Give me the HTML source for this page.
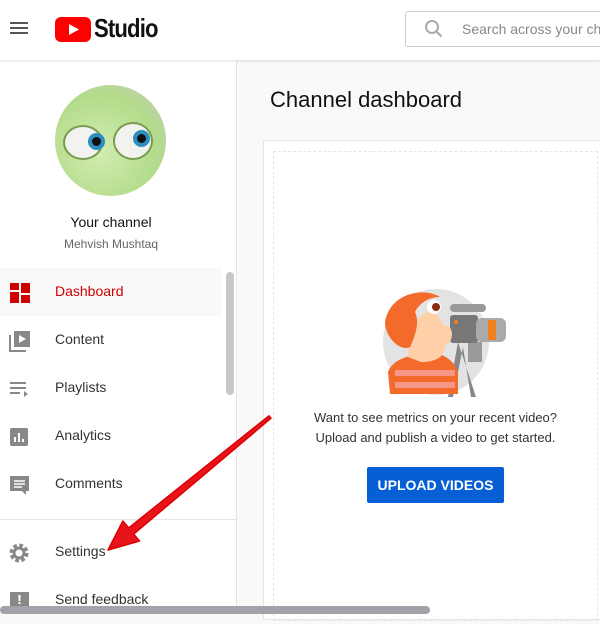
<!DOCTYPE html>
<html><head><meta charset="utf-8"><style>
*{margin:0;padding:0;box-sizing:border-box}
body{width:600px;height:612px;overflow:hidden;background:#f9f9f9;font-family:"Liberation Sans",sans-serif;position:relative}
.hdr{position:absolute;left:0;top:0;width:600px;height:60px;background:#fff;box-shadow:0 1px 3px rgba(0,0,0,.12);z-index:2}
.side{position:absolute;left:0;top:60px;width:237px;height:552px;background:#fff;border-right:1px solid #e5e5e5}
.item{position:absolute;left:0;width:222px;height:48px}
.item span{position:absolute;left:55px;top:15px;font-size:14px;color:#333}
.item svg{position:absolute;left:9px;top:14px}
</style></head><body>
<div class="hdr">
<div style="position:absolute;left:10px;top:22px;width:18px;height:2px;background:#555;box-shadow:0 5px 0 #555,0 10px 0 #555"></div>
<svg style="position:absolute;left:55px;top:17px" width="36" height="25"><rect width="36" height="25" rx="6" fill="#f00"/><path d="M14 7l10 5.5-10 5.5z" fill="#fff"/></svg>
<div style="position:absolute;left:94px;top:13px;font-size:26px;font-weight:bold;color:#111;letter-spacing:-1px;transform:scaleX(.85);transform-origin:left">Studio</div>
<div style="position:absolute;left:405px;top:11px;width:220px;height:36px;border:1px solid #ccc;border-radius:3px"></div>
<svg style="position:absolute;left:424px;top:19px" width="20" height="20"><circle cx="8" cy="8" r="6" fill="none" stroke="#aaa" stroke-width="2"/><path d="M12.5 12.5l5 5" stroke="#aaa" stroke-width="2"/></svg>
<div style="position:absolute;left:462px;top:21px;font-size:14px;color:#888;white-space:nowrap">Search across your cha</div>
</div>
<div class="side">
<div style="position:absolute;left:55px;top:25px;width:111px;height:111px;border-radius:50%;background:radial-gradient(circle at 40% 60%,#d2ecb0,#b2dc8a 60%,#c8c8c0)"></div>
<div style="position:absolute;left:63px;top:65px;width:40px;height:35px;border-radius:50%;background:#f2f2ee;border:2px solid #7a9a50"></div>
<div style="position:absolute;left:113px;top:62px;width:40px;height:38px;border-radius:50%;background:#f2f2ee;border:2px solid #7a9a50"></div>
<div style="position:absolute;left:88px;top:73px;width:17px;height:17px;border-radius:50%;background:#111;border:4px solid #2a8fc0"></div>
<div style="position:absolute;left:133px;top:70px;width:17px;height:17px;border-radius:50%;background:#111;border:4px solid #2a8fc0"></div>
<div style="position:absolute;left:0;top:154px;width:222px;text-align:center;font-size:14px;color:#111">Your channel</div>
<div style="position:absolute;left:0;top:177px;width:222px;text-align:center;font-size:12px;color:#666">Mehvish Mushtaq</div>
<div class="item" style="top:208px;background:#f9f9f9"><svg width="22" height="22"><rect x="1" y="1" width="9" height="7" fill="#c00"/><rect x="12" y="1" width="9" height="10" fill="#c00"/><rect x="1" y="10" width="9" height="11" fill="#c00"/><rect x="12" y="13" width="9" height="8" fill="#c00"/></svg><span style="color:#c00">Dashboard</span></div>
<div class="item" style="top:256px"><svg width="22" height="22"><path d="M1 5v16h16" fill="none" stroke="#888" stroke-width="2"/><rect x="5" y="1" width="16" height="16" fill="#888"/><path d="M10 5l7 4-7 4z" fill="#fff"/></svg><span>Content</span></div>
<div class="item" style="top:304px"><svg width="22" height="22"><path d="M1 5h16M1 10h16M1 15h10" stroke="#888" stroke-width="2"/><path d="M15 13l4 3-4 3z" fill="#888"/></svg><span>Playlists</span></div>
<div class="item" style="top:352px"><svg width="22" height="22"><rect x="1" y="2" width="18" height="18" rx="2" fill="#888"/><path d="M6 16v-5M10 16v-9M14 16v-3" stroke="#fff" stroke-width="2"/></svg><span>Analytics</span></div>
<div class="item" style="top:400px"><svg width="22" height="22"><path d="M1 2h19v15h-3v4l-4-4H1z" fill="#888"/><path d="M5 7h11M5 10h11M5 13h8" stroke="#fff" stroke-width="1.5"/></svg><span>Comments</span></div>
<div style="position:absolute;left:0;top:459px;width:237px;height:1px;background:#e5e5e5"></div>
<div class="item" style="top:468px"><svg width="22" height="22"><circle cx="10" cy="11" r="7" fill="none" stroke="#888" stroke-width="5" stroke-dasharray="3.3 2.2"/><circle cx="10" cy="11" r="5" fill="none" stroke="#888" stroke-width="3"/></svg><span>Settings</span></div>
<div class="item" style="top:516px"><svg width="22" height="22"><path d="M1 2h19v15H5l-4 4z" fill="#888"/><rect x="9.5" y="5" width="2" height="6" fill="#fff"/><rect x="9.5" y="12" width="2" height="2" fill="#fff"/></svg><span>Send feedback</span></div>
<div style="position:absolute;left:226px;top:212px;width:8px;height:123px;border-radius:4px;background:#c8c8c8"></div>
</div>
<div style="position:absolute;left:270px;top:87px;font-size:22px;color:#111">Channel dashboard</div>
<div style="position:absolute;left:263px;top:140px;width:340px;height:480px;background:#fff;border:1px solid #e5e5e5"></div>
<div style="position:absolute;left:273px;top:151px;width:325px;height:470px;border:1px dashed #e5e5e5"></div>
<svg style="position:absolute;left:370px;top:282px" width="140" height="120">
<circle cx="66" cy="60" r="53" fill="#e3e3e3"/>
<path d="M98 60h14v20h-14z" fill="#999"/>
<path d="M88 60l-10 55h5l10-50 8 50h5z" fill="#888"/>
<path d="M18 90c5-15 30-20 50-18 10 2 18 10 20 20v20H20z" fill="#f46a2a"/>
<path d="M25 88h60v6H25zM25 100h60v6H25z" fill="#f7a3a3" opacity=".8"/>
<path d="M38 75c0-20 5-40 20-45 15 0 18 20 18 30 0 15-10 20-25 20z" fill="#ffd0a8"/>
<path d="M15 40c5-30 40-35 55-25-10 0-20 5-25 15 5 10 0 25-5 35-10 5-25-10-25-25z" fill="#f46a2a"/>
<circle cx="64" cy="25" r="7" fill="#fff"/><circle cx="66" cy="25" r="4" fill="#8b2a10"/>
<rect x="80" y="33" width="28" height="28" rx="3" fill="#777"/>
<rect x="80" y="22" width="36" height="8" rx="4" fill="#999"/>
<rect x="106" y="36" width="30" height="24" rx="6" fill="#aaa"/>
<rect x="118" y="38" width="8" height="20" fill="#f08020"/>
<circle cx="86" cy="40" r="2" fill="#f08020"/>
<path d="M70 45c10-5 15 5 10 15-5 5-10 3-10 0z" fill="#ffd0a8"/>
</svg>
<div style="position:absolute;left:263px;top:408px;width:345px;text-align:center;font-size:13px;color:#333;line-height:20px">Want to see metrics on your recent video?<br>Upload and publish a video to get started.</div>
<div style="position:absolute;left:367px;top:467px;width:137px;height:36px;background:#065fd4;border-radius:2px;color:#fff;font-size:14px;font-weight:bold;text-align:center;line-height:36px">UPLOAD VIDEOS</div>
<svg style="position:absolute;left:0;top:0" width="600" height="612"><polygon points="269,415.8 128.7,527.9 122.9,521 108,550 139.5,541 133.7,534.1 271,418.2" fill="#e8141a" stroke="#d00" stroke-width="1.5" stroke-linejoin="round"/></svg>
<div style="position:absolute;left:0;top:606px;width:430px;height:8px;border-radius:4px;background:#a2a3aa"></div>
</body></html>
